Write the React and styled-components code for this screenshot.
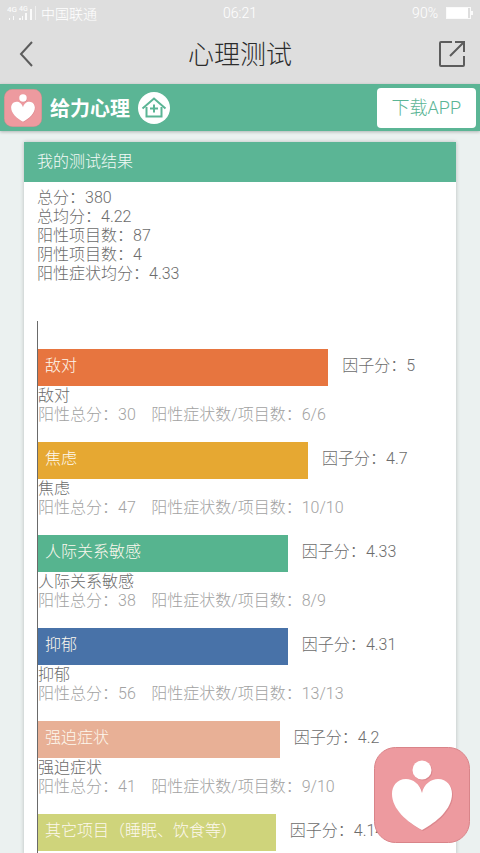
import styled, { createGlobalStyle } from "styled-components";

const GlobalStyle = createGlobalStyle`
  * {
    box-sizing: border-box;
  }
  body {
    margin: 0;
    background: #ebf1f0;
    font-family: Roboto, "Noto Sans CJK SC", sans-serif;
    font-size: 16px;
    font-weight: 300;
    color: #6c6c6c;
  }
`;

const Style = {
  TopArea: styled.header`
    background: #dedede;
  `,
  StatusBar: styled.div`
    height: 26px;
    padding: 0 7px;
    display: grid;
    grid-template-columns: 1fr auto 1fr;
    align-items: center;
    color: #ffffff;
    font-size: 14px;
  `,
  StatusGroup: styled.div`
    display: flex;
    align-items: center;
    justify-content: ${(props) => (props.$end ? "flex-end" : "flex-start")};
    gap: ${(props) => (props.$end ? "8px" : "4px")};
  `,
  NavBar: styled.div`
    height: 58px;
    padding: 0 14px;
    display: flex;
    align-items: center;
    justify-content: space-between;
  `,
  NavTitle: styled.h1`
    margin: 0;
    color: #2c2c2c;
    font-size: 26px;
    font-weight: 300;
    line-height: 58px;
  `,
  IconBtn: styled.button`
    display: flex;
    padding: 0;
    border: none;
    background: transparent;
    color: #5c5c5c;
  `,
  BrandBar: styled.div`
    height: 47px;
    padding: 0 4px;
    display: flex;
    align-items: center;
    gap: 8px;
    background: #5bb595;
    box-shadow: 0 1px 3px rgba(0, 0, 0, 0.25);
  `,
  BrandName: styled.div`
    color: #ffffff;
    font-size: 20px;
    font-weight: 700;
  `,
  HomeLink: styled.a`
    display: flex;
    color: #5bb595;
  `,
  DownloadBtn: styled.button`
    height: 40px;
    margin-left: auto;
    padding: 0 15px 4px;
    border: none;
    border-radius: 4px;
    background: #ffffff;
    color: #5bb595;
    font-family: inherit;
    font-size: 18px;
    font-weight: 300;
  `,
  Card: styled.main`
    margin: 11px 24px 0;
    padding-bottom: 2px;
    background: #ffffff;
    box-shadow: 0 0 4px rgba(0, 0, 0, 0.22);
  `,
  CardTitle: styled.h2`
    margin: 0;
    padding: 0 13px;
    background: #5bb595;
    color: #f4faf7;
    font-size: 16px;
    font-weight: 300;
    line-height: 40px;
  `,
  Summary: styled.div`
    padding: 6px 13px 0;
    line-height: 19px;
  `,
  Chart: styled.div`
    margin: 38px 15px 0 13px;
    padding: 28px 0 2px;
    border-left: 1px solid #6a6a6a;
  `,
  Factor: styled.section`
    & + & {
      margin-top: 18px;
    }
  `,
  BarRow: styled.div`
    display: flex;
    gap: 14px;
    line-height: 33px;
    white-space: nowrap;
  `,
  Bar: styled.div`
    flex: none;
    height: 37px;
    padding-left: 7px;
    background: ${(props) => props.$color};
    color: #fdf8ee;
  `,
  FactorText: styled.div`
    line-height: 19px;
    color: ${(props) => (props.$light ? "#a2a2a2" : "#6c6c6c")};
    white-space: pre;
  `,
  FloatBtn: styled.button`
    position: fixed;
    right: 10px;
    bottom: 10px;
    display: flex;
    padding: 0;
    border: none;
    background: transparent;
  `,
};

const summary = [
  ["总分", "380"],
  ["总均分", "4.22"],
  ["阳性项目数", "87"],
  ["阴性项目数", "4"],
  ["阳性症状均分", "4.33"],
];

const factors = [
  { name: "敌对", score: "5", width: 72, color: "#e7753f", total: 30, count: "6/6" },
  { name: "焦虑", score: "4.7", width: 67, color: "#e6a832", total: 47, count: "10/10" },
  { name: "人际关系敏感", score: "4.33", width: 62, color: "#56b48f", total: 38, count: "8/9" },
  { name: "抑郁", score: "4.31", width: 62, color: "#4872a8", total: 56, count: "13/13" },
  { name: "强迫症状", score: "4.2", width: 60, color: "#e8b096", total: 41, count: "9/10" },
  { name: "其它项目（睡眠、饮食等）", score: "4.14", width: 59, color: "#cfd47b" },
];

function HeartLogo({ size }) {
  return (
    <svg width={size} height={size} viewBox="0 0 96 96" aria-hidden="true">
      <rect x="0.5" y="0.5" width="95" height="95" rx="21" fill="#ed9a9f" stroke="#d98489" />
      <g fill="#d07b82" opacity="0.6" transform="translate(1 1)">
        <circle cx="48" cy="23" r="9.5" />
        <path d="M48 46C46 37 39 32 32 32C23 32 18 39 18 47C18 62 33 75 48 83C63 75 78 62 78 47C78 39 73 32 64 32C57 32 50 37 48 46Z" />
      </g>
      <g fill="#ffffff">
        <circle cx="48" cy="23" r="9.5" />
        <path d="M48 46C46 37 39 32 32 32C23 32 18 39 18 47C18 62 33 75 48 83C63 75 78 62 78 47C78 39 73 32 64 32C57 32 50 37 48 46Z" />
      </g>
    </svg>
  );
}

function SignalIcon() {
  return (
    <svg width="30" height="18" viewBox="0 0 30 18" fill="#fafafa" aria-hidden="true">
      <text x="0" y="8" fontSize="8" fontWeight="500">4G</text>
      <text x="12" y="7" fontSize="7" fontWeight="500">4G</text>
      <path d="M2 14h1v2H2zM6 12h1v4H6zM12 14h2v2h-2zM15 12h1v4h-1zM18 9h2v7h-2zM23 5h2v11h-2z" />
      <path d="M28 2h1v14h-1z" opacity="0.6" />
    </svg>
  );
}

function App() {
  return (
    <>
      <GlobalStyle />
      <Style.TopArea>
        <Style.StatusBar>
          <Style.StatusGroup>
            <SignalIcon />
            <span>中国联通</span>
          </Style.StatusGroup>
          <span>06:21</span>
          <Style.StatusGroup $end>
            <span>90%</span>
            <svg width="27" height="12" viewBox="0 0 27 12" aria-hidden="true">
              <rect x="0.5" y="0.5" width="24" height="11" fill="none" stroke="#fafafa" />
              <rect x="1" y="1" width="21" height="10" fill="#ffffff" />
              <path d="M25 4h2v4h-2z" fill="#fafafa" />
            </svg>
          </Style.StatusGroup>
        </Style.StatusBar>
        <Style.NavBar>
          <Style.IconBtn aria-label="返回">
            <svg width="28" height="28" viewBox="0 0 28 28" fill="none" stroke="currentColor" strokeWidth="2">
              <path d="M18 1L7 13L18 25" />
            </svg>
          </Style.IconBtn>
          <Style.NavTitle>心理测试</Style.NavTitle>
          <Style.IconBtn aria-label="分享">
            <svg width="28" height="28" viewBox="0 0 28 28" fill="none" stroke="currentColor" strokeWidth="2">
              <path d="M14 1H3Q2 1 2 2V24Q2 25 3 25H25Q26 25 26 24V15" />
              <path d="M12 15L25 2M17 1H26V11" />
            </svg>
          </Style.IconBtn>
        </Style.NavBar>
      </Style.TopArea>
      <Style.BrandBar>
        <HeartLogo size={38} />
        <Style.BrandName>给力心理</Style.BrandName>
        <Style.HomeLink href="#" aria-label="首页">
          <svg width="32" height="32" viewBox="0 0 32 32" fill="none" stroke="currentColor" strokeWidth="2">
            <circle cx="16" cy="16" r="16" fill="#ffffff" stroke="none" />
            <path d="M8.500 15V24.500H23.500V15" />
            <path d="M4.500 16.500L16 6.500L27.500 16.500" />
            <path d="M16 12.500V20.500M12 16.500H20" />
          </svg>
        </Style.HomeLink>
        <Style.DownloadBtn>下载APP</Style.DownloadBtn>
      </Style.BrandBar>
      <Style.Card>
        <Style.CardTitle>我的测试结果</Style.CardTitle>
        <Style.Summary>
          {summary.map(([label, value]) => (
            <div key={label}>{label}：{value}</div>
          ))}
        </Style.Summary>
        <Style.Chart>
          {factors.map((factor) => (
            <Style.Factor key={factor.name}>
              <Style.BarRow>
                <Style.Bar $color={factor.color} style={{ width: `${factor.width}%` }}>
                  {factor.name}
                </Style.Bar>
                <span>因子分：{factor.score}</span>
              </Style.BarRow>
              {factor.count && (
                <>
                  <Style.FactorText>{factor.name}</Style.FactorText>
                  <Style.FactorText $light>
                    {`阳性总分：${factor.total}    阳性症状数/项目数：${factor.count}`}
                  </Style.FactorText>
                </>
              )}
            </Style.Factor>
          ))}
        </Style.Chart>
      </Style.Card>
      <Style.FloatBtn aria-label="给力心理">
        <HeartLogo size={96} />
      </Style.FloatBtn>
    </>
  );
}

export default App;
